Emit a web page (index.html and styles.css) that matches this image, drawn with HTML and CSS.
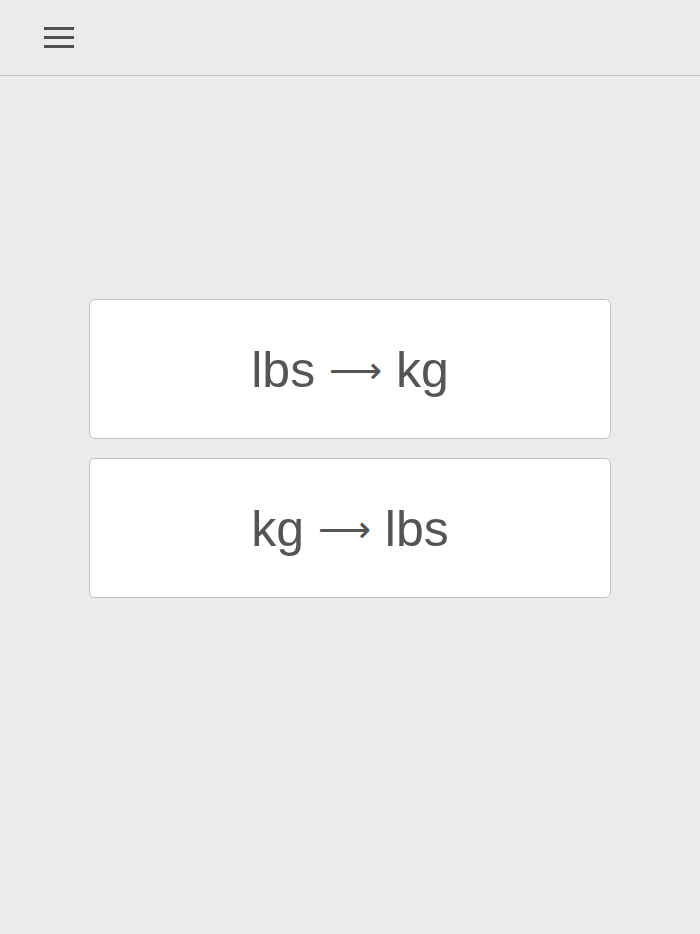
FILE: index.html
```html
<!DOCTYPE html>
<html>
<head>
<meta charset="utf-8">
<link rel="stylesheet" href="styles.css">
</head>
<body>
<header class="topbar">
  <button class="menu" aria-label="Menu">
    <span class="bar"></span><span class="bar"></span><span class="bar"></span>
  </button>
</header>
<main class="content">
  <div class="choices">
    <button class="choice">lbs <span class="arrow">⟶</span> kg</button>
    <button class="choice">kg <span class="arrow">⟶</span> lbs</button>
  </div>
</main>
</body>
</html>
```
FILE: styles.css
```css
* { box-sizing: border-box; }
html, body { margin: 0; padding: 0; }
body {
  background: #ecebe9;
  font-family: "Liberation Sans", Arial, sans-serif;
  color: #555555;
  width: 700px;
  height: 934px;
}
.topbar {
  height: 76px;
  border-bottom: 1px solid #c9c8c6;
  display: flex;
  align-items: flex-start;
}
.menu {
  margin: 27px 0 0 44px;
  padding: 0;
  border: 0;
  background: none;
  width: 30px;
  display: flex;
  flex-direction: column;
  gap: 6px;
}
.bar {
  display: block;
  width: 30px;
  height: 3px;
  background: #505050;
}
.content {
  padding: 223px 89px 0 89px;
}
.choices {
  display: flex;
  flex-direction: column;
  gap: 19px;
}
.choice {
  height: 140px;
  width: 522px;
  background: #ffffff;
  border: 1px solid #c4c3c1;
  border-radius: 6px;
  font-family: "Liberation Sans", Arial, sans-serif;
  font-size: 50px;
  color: #555555;
  display: flex;
  align-items: center;
  justify-content: center;
  gap: 0;
  white-space: pre;
  padding: 2px 0 0 0;
}
.arrow {
  font-family: "DejaVu Sans", sans-serif;
  font-size: 37px;
}
```
